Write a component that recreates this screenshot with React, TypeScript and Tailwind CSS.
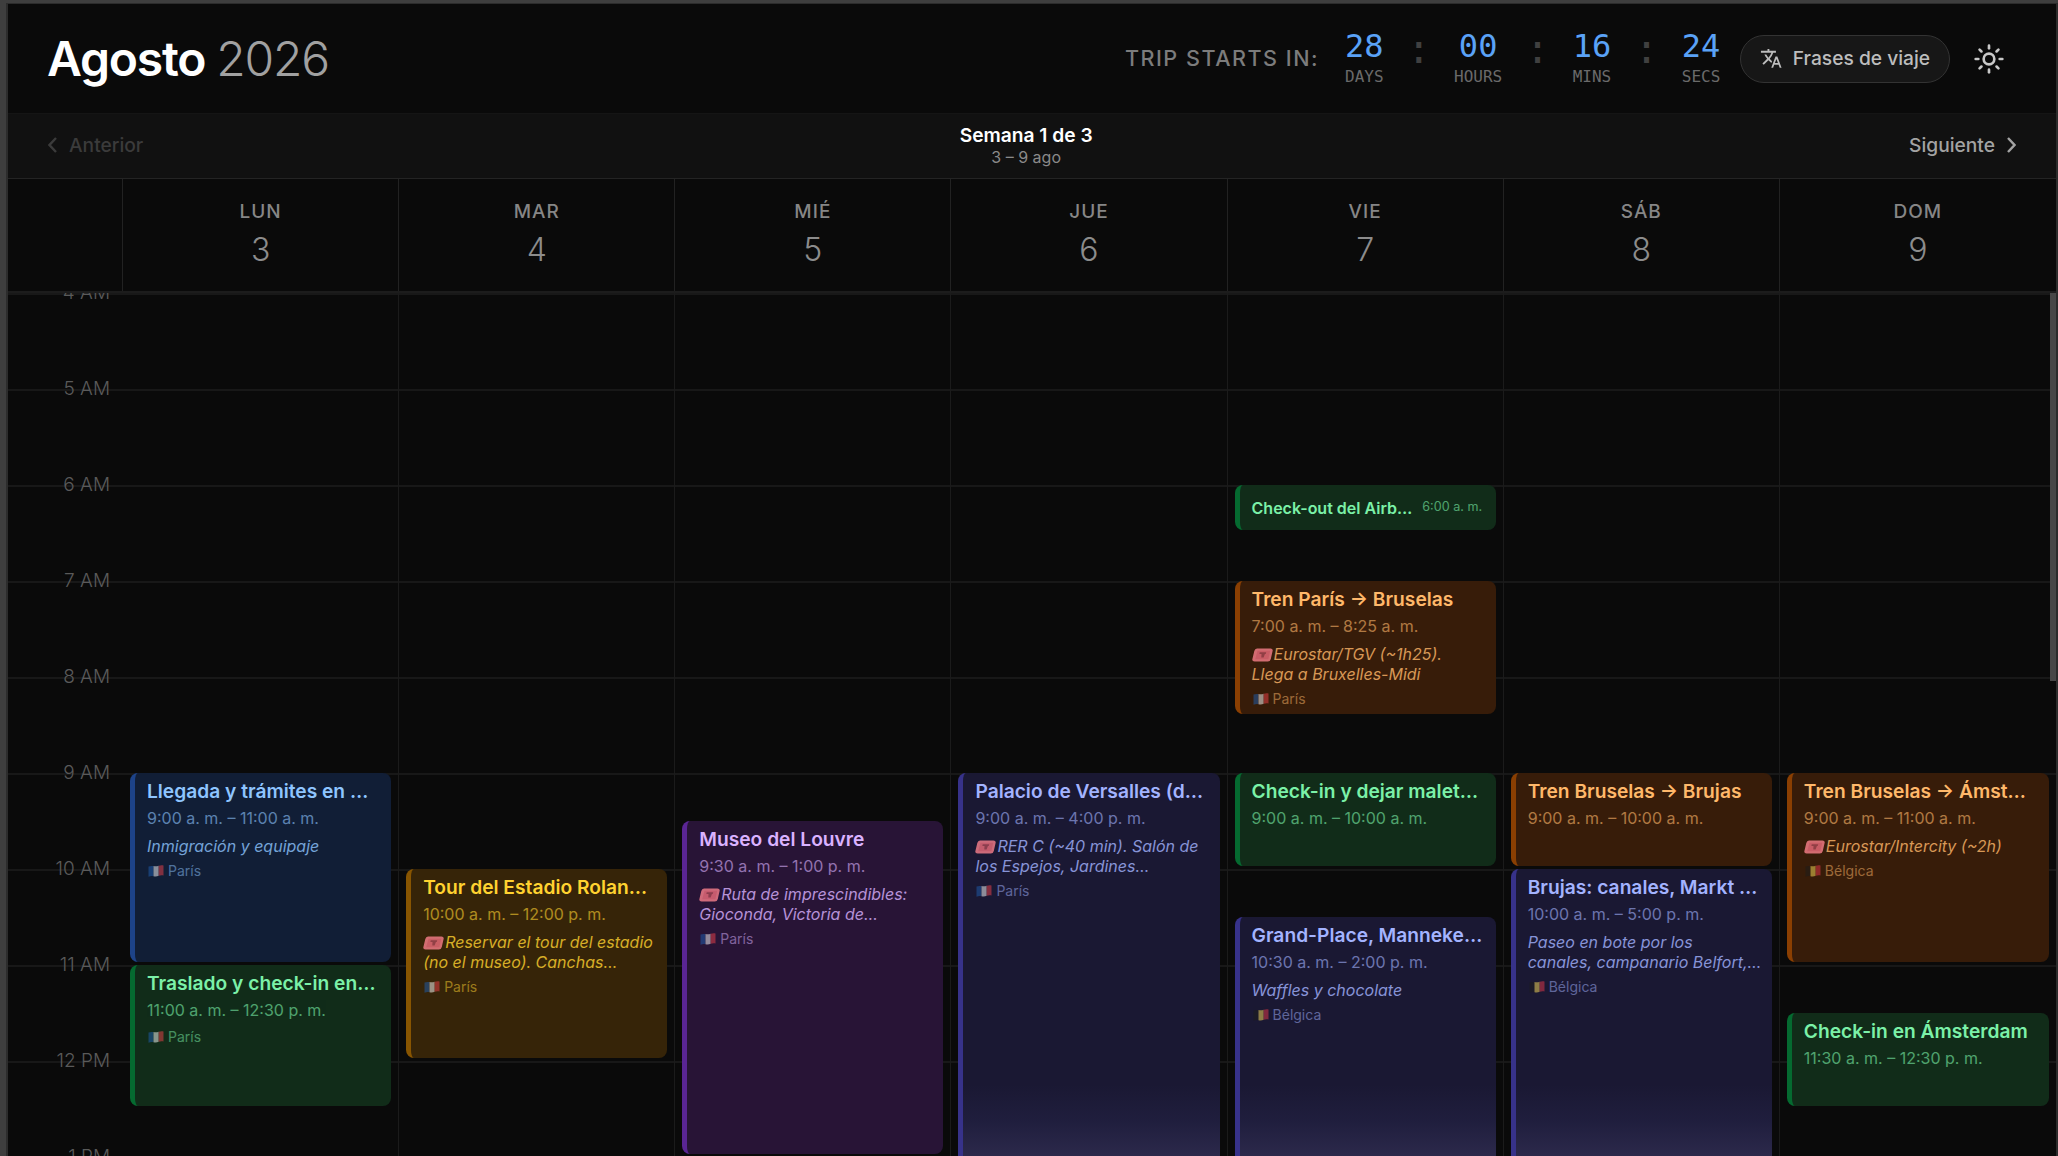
import React from 'react';
import { Sun } from 'lucide-react';

type Color = 'blue' | 'green' | 'amber' | 'purple' | 'indigo' | 'orange';
type Country = 'fr' | 'be';

interface TripEvent {
    title: string;
    time: string;
    start: number;
    end: number;
    color: Color;
    ticket?: boolean;
    notes?: string[];
    place?: Country;
    compact?: boolean;
}

interface Day {
    name: string;
    date: number;
    events: TripEvent[];
}

const HOUR_HEIGHT = 96;
const FIRST_HOUR = 4;
const GLOW_HOUR = 12.25;

const colorStyles: Record<Color, { card: string; text: string }> = {
    blue: { card: 'border-[#1d4389] bg-[#111e36]', text: 'text-[#8ec5ff]' },
    green: { card: 'border-[#056a30] bg-[#112c19]', text: 'text-[#7bf1a8]' },
    amber: { card: 'border-[#885501] bg-[#362408]', text: 'text-[#ffd230]' },
    purple: { card: 'border-[#5a2594] bg-[#281436]', text: 'text-[#dab2ff]' },
    indigo: { card: 'border-[#37328a] bg-[#1a1833]', text: 'text-[#a3b3ff]' },
    orange: { card: 'border-[#8a3f02] bg-[#371c09]', text: 'text-[#ffb86a]' },
};

const days: Day[] = [
    {
        name: 'LUN',
        date: 3,
        events: [
            { title: 'Llegada y trámites en …', time: '9:00 a. m. – 11:00 a. m.', start: 9, end: 11, color: 'blue', notes: ['Inmigración y equipaje'], place: 'fr' },
            { title: 'Traslado y check-in en…', time: '11:00 a. m. – 12:30 p. m.', start: 11, end: 12.5, color: 'green', place: 'fr' },
        ],
    },
    {
        name: 'MAR',
        date: 4,
        events: [
            { title: 'Tour del Estadio Rolan…', time: '10:00 a. m. – 12:00 p. m.', start: 10, end: 12, color: 'amber', ticket: true, notes: ['Reservar el tour del estadio', '(no el museo). Canchas…'], place: 'fr' },
        ],
    },
    {
        name: 'MIÉ',
        date: 5,
        events: [
            { title: 'Museo del Louvre', time: '9:30 a. m. – 1:00 p. m.', start: 9.5, end: 13, color: 'purple', ticket: true, notes: ['Ruta de imprescindibles:', 'Gioconda, Victoria de…'], place: 'fr' },
        ],
    },
    {
        name: 'JUE',
        date: 6,
        events: [
            { title: 'Palacio de Versalles (d…', time: '9:00 a. m. – 4:00 p. m.', start: 9, end: 16, color: 'indigo', ticket: true, notes: ['RER C (~40 min). Salón de', 'los Espejos, Jardines…'], place: 'fr' },
        ],
    },
    {
        name: 'VIE',
        date: 7,
        events: [
            { title: 'Check-out del Airb…', time: '6:00 a. m.', start: 6, end: 6.5, color: 'green', compact: true },
            { title: 'Tren París → Bruselas', time: '7:00 a. m. – 8:25 a. m.', start: 7, end: 8.4167, color: 'orange', ticket: true, notes: ['Eurostar/TGV (~1h25).', 'Llega a Bruxelles-Midi'], place: 'fr' },
            { title: 'Check-in y dejar malet…', time: '9:00 a. m. – 10:00 a. m.', start: 9, end: 10, color: 'green' },
            { title: 'Grand-Place, Manneke…', time: '10:30 a. m. – 2:00 p. m.', start: 10.5, end: 14, color: 'indigo', notes: ['Waffles y chocolate'], place: 'be' },
        ],
    },
    {
        name: 'SÁB',
        date: 8,
        events: [
            { title: 'Tren Bruselas → Brujas', time: '9:00 a. m. – 10:00 a. m.', start: 9, end: 10, color: 'orange' },
            { title: 'Brujas: canales, Markt …', time: '10:00 a. m. – 5:00 p. m.', start: 10, end: 17, color: 'indigo', notes: ['Paseo en bote por los', 'canales, campanario Belfort,…'], place: 'be' },
        ],
    },
    {
        name: 'DOM',
        date: 9,
        events: [
            { title: 'Tren Bruselas → Ámst…', time: '9:00 a. m. – 11:00 a. m.', start: 9, end: 11, color: 'orange', ticket: true, notes: ['Eurostar/Intercity (~2h)'], place: 'be' },
            { title: 'Check-in en Ámsterdam', time: '11:30 a. m. – 12:30 p. m.', start: 11.5, end: 12.5, color: 'green' },
        ],
    },
];

const hours = ['4 AM', '5 AM', '6 AM', '7 AM', '8 AM', '9 AM', '10 AM', '11 AM', '12 PM', '1 PM'];

const countdown = [
    { value: '28', label: 'DAYS' },
    { value: '00', label: 'HOURS' },
    { value: '16', label: 'MINS' },
    { value: '24', label: 'SECS' },
];

const flags: Record<Country, { name: string; stripes: string[] }> = {
    fr: { name: 'París', stripes: ['#1f5fb0', '#ffffff', '#f0434b'] },
    be: { name: 'Bélgica', stripes: ['#1c1c1c', '#ffe15a', '#e8394a'] },
};

const Flag: React.FC<{ country: Country }> = ({ country }) => {
    const [left, middle, right] = flags[country].stripes;
    return (
        <svg viewBox="0 0 16 12" className="ml-px w-4 h-3 flex-shrink-0">
            <path d="M0.5 1.6C2 .9 3.700 .8 5.500 1.100V11.200C3.700 10.900 2 11 .5 11.700Z" fill={left} />
            <path d="M5.500 1.100C7.500 1.500 9 1.400 10.700 .7V10.700C9 11.500 7.500 11.500 5.500 11.200Z" fill={middle} />
            <path d="M10.700 .7C12.300 .1 14 0 15.500 .4V10.400C14 10 12.300 10.100 10.700 10.700Z" fill={right} />
        </svg>
    );
};

const Ticket = () => (
    <svg viewBox="0 0 21 14" className="inline-block w-[21px] h-[14px] mr-px align-[-2px]">
        <path d="M5 .5H18.500Q21.200 .5 20.600 3L18.800 11Q18.200 13.500 15.800 13.500H2.500Q-.2 13.500 .4 11L2.300 3Q2.900 .5 5 .5Z" fill="#f9808c" />
        <path d="M5.500 2.800H18.200L16.400 11.200H3.200Z" fill="#ee6d7c" />
        <path d="M7.700 4.200H14.200L13.700 6H12.900L11.600 9.600H9.300L9.500 6H7.400Z" fill="#a84855" />
    </svg>
);

const EventCard: React.FC<{ event: TripEvent }> = ({ event }) => {
    const styles = colorStyles[event.color];
    const top = (event.start - FIRST_HOUR) * HOUR_HEIGHT;
    const height = (event.end - event.start) * HOUR_HEIGHT - 3;

    if (event.compact) {
        return (
            <div className={`absolute left-[7px] right-[7px] rounded-lg border-l-[5px] pl-3 flex items-center gap-2.5 whitespace-nowrap ${styles.card}`} style={{ top, height }}>
                <span className={`text-[16px] font-semibold ${styles.text}`}>{event.title}</span>
                <span className={`text-[12.6px] opacity-60 ${styles.text}`}>{event.time}</span>
            </div>
        );
    }

    return (
        <div className={`absolute left-[7px] right-[7px] rounded-lg border-l-[5px] pl-3 pt-[5px] overflow-hidden whitespace-nowrap ${styles.card}`} style={{ top, height }}>
            {event.color === 'indigo' && (
                <div
                    className="absolute left-0 right-0 h-[72px] bg-linear-to-b from-transparent via-[#252448]/50 to-[#2c294b]"
                    style={{ top: (GLOW_HOUR - event.start) * HOUR_HEIGHT }}
                />
            )}
            <div className={`text-[19.2px] leading-[26px] font-semibold ${styles.text}`}>{event.title}</div>
            <div className={`mt-0.5 text-[16px] leading-6 opacity-60 ${styles.text}`}>{event.time}</div>
            {event.notes && (
                <div className={`mt-1.5 text-[16px] leading-5 italic opacity-80 ${styles.text}`}>
                    {event.notes.map((line, i) => (
                        <div key={line}>
                            {i === 0 && event.ticket && <Ticket />}
                            {line}
                        </div>
                    ))}
                </div>
            )}
            {event.place && (
                <div className={`mt-[5px] flex items-center gap-1 text-[14px] leading-5 opacity-50 ${styles.text}`}>
                    <Flag country={event.place} />
                    {flags[event.place].name}
                </div>
            )}
        </div>
    );
};

const Header = () => (
    <header className="h-[110px] flex-shrink-0 flex items-center justify-between pl-[39px] pr-[51px] border-b border-[#151515]">
        <h1 className="text-[48px] font-semibold tracking-tight text-white">
            Agosto <span className="font-light text-[#a1a1a1]">2026</span>
        </h1>
        <div className="flex items-center">
            <span className="text-[21.6px] font-medium tracking-[1.5px] text-[#7c7c7c] mr-[26px]">TRIP STARTS IN:</span>
            {countdown.map((unit, i) => (
                <React.Fragment key={unit.label}>
                    {i > 0 && (
                        <span className="w-[70.5px] pb-[19px] text-center font-['DejaVu_Sans_Mono',monospace] text-[40px] leading-10 text-[#404040]">:</span>
                    )}
                    <div className="mb-0.5 flex flex-col items-center font-['DejaVu_Sans_Mono',monospace]">
                        <span className="text-[32px] leading-[38px] text-[#5aa2f7]">{unit.value}</span>
                        <span className="text-[16px] leading-6 text-[#6a6a6a]">{unit.label}</span>
                    </div>
                </React.Fragment>
            ))}
            <button className="ml-5 h-12 pl-5 pr-[19px] flex items-center gap-[9px] rounded-full border border-[#333] bg-[#171717] text-[19.2px] font-medium text-[#bdbdbd]">
                <svg viewBox="0 0 24 24" fill="currentColor" className="w-[22.5px] h-[22.5px] -ml-px mr-px">
                    <path d="M12.870 15.070l-2.540-2.510.03-.03A17.520 17.520 0 0014.070 6H17V4h-7V2H8v2H1v2h11.170C11.500 7.920 10.440 9.750 9 11.350 8.070 10.320 7.300 9.190 6.690 8h-2c.73 1.630 1.730 3.170 2.980 4.560l-5.090 5.020L4 19l5-5 3.110 3.110.76-2.040zM18.500 10h-2L12 22h2l1.120-3h4.750L21 22h2l-4.500-12zm-2.620 7l1.620-4.330L19.120 17h-3.240z" />
                </svg>
                Frases de viaje
            </button>
            <Sun className="ml-[23px] text-[#c8c8c8]" size={32} strokeWidth={2} />
        </div>
    </header>
);

const WeekNav = () => (
    <nav className="h-[65px] flex-shrink-0 flex items-center justify-between px-10 bg-[#111] border-b border-[#242424]">
        <div className="pb-0.5 flex items-center gap-3 text-[19.2px] font-medium text-[#3b3b3b]">
            <svg viewBox="0 0 9 16" className="w-[9px] h-4" fill="none" stroke="currentColor" strokeWidth={2.4}>
                <path d="M8 1L1.500 8L8 15" />
            </svg>
            Anterior
        </div>
        <div className="pb-0.5 text-center">
            <div className="text-[19.2px] leading-6 font-semibold text-white">Semana 1 de 3</div>
            <div className="text-[16px] leading-5 text-[#8a8a8a]">3 – 9 ago</div>
        </div>
        <div className="pb-0.5 flex items-center justify-end gap-3 text-[19.2px] font-medium text-[#a3a3a3]">
            Siguiente
            <svg viewBox="0 0 9 16" className="w-[9px] h-4" fill="none" stroke="currentColor" strokeWidth={2.4}>
                <path d="M1 1L7.500 8L1 15" />
            </svg>
        </div>
    </nav>
);

export default function App() {
    return (
        <div className="w-[2058px] h-[1156px] overflow-hidden bg-[#3e3e3e] pl-1.5 pt-[3px] font-['Inter',sans-serif]">
            <div className="h-full flex flex-col border-l-2 border-r-2 border-t border-[#2c2c2c] bg-[#0a0a0a]">
                <Header />
                <WeekNav />
                <div className="h-[114px] flex-shrink-0 flex border-b-2 border-[#1c1c1c]">
                    <div className="w-[115px] border-r border-[#222]" />
                    <div className="flex-1 grid grid-cols-7">
                        {days.map(day => (
                            <div key={day.name} className="pt-[21px] text-center border-r border-[#222] last:border-r-0">
                                <div className="text-[19px] leading-6 font-medium tracking-[1px] text-[#868686]">{day.name}</div>
                                <div className="mt-1.5 text-[32px] leading-10 font-light text-[#8c8c8c]">{day.date}</div>
                            </div>
                        ))}
                    </div>
                </div>
                <div className="relative flex-1 min-h-0 flex overflow-hidden">
                    <div className="absolute inset-0">
                        {hours.map(hour => (
                            <div key={hour} className="h-24 border-t-2 border-[#181818]" />
                        ))}
                    </div>
                    <div className="relative w-[115px] flex-shrink-0">
                        {hours.map(hour => (
                            <div key={hour} className="h-24 pr-[13px] text-right text-[19px] leading-6 font-light text-[#5a5a5a]">
                                <div className="-translate-y-3">{hour}</div>
                            </div>
                        ))}
                    </div>
                    <div className="flex-1 grid grid-cols-7">
                        {days.map(day => (
                            <div key={day.name} className="relative border-r border-[#1b1b1b] last:border-r-0">
                                {day.events.map(event => (
                                    <EventCard key={event.title} event={event} />
                                ))}
                            </div>
                        ))}
                    </div>
                    <div className="absolute right-0 top-0 w-1.5 h-[388px] bg-[#474747]" />
                </div>
            </div>
        </div>
    );
}
